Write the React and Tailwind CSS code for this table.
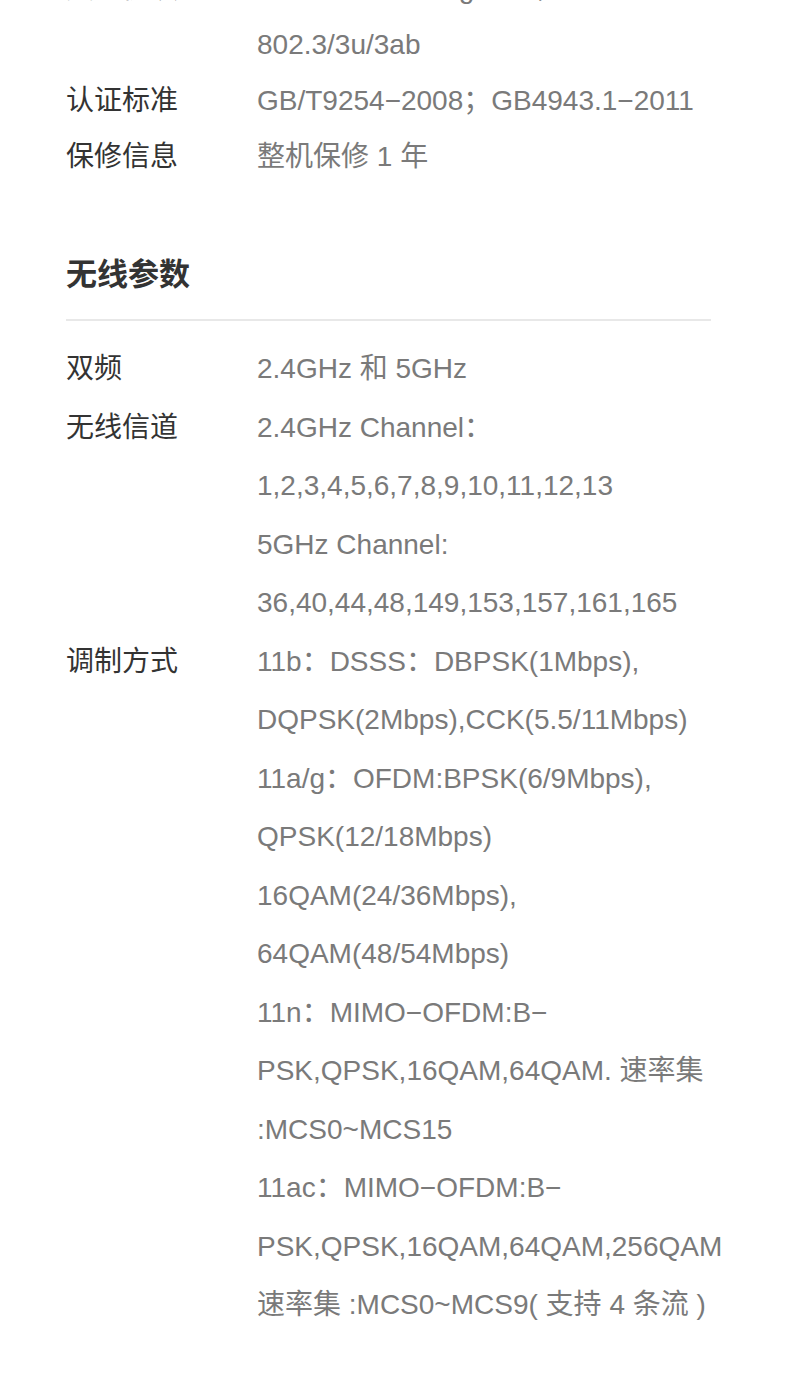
import React from 'react';

const topRows = [
    { label: '支持协议', lines: ['IEEE 802.11a/b/g/n/ac，IEEE', '802.3/3u/3ab'] },
    { label: '认证标准', lines: ['GB/T9254−2008；GB4943.1−2011'] },
    { label: '保修信息', lines: ['整机保修 1 年'] },
];

const wirelessRows = [
    { label: '双频', lines: ['2.4GHz 和 5GHz'] },
    {
        label: '无线信道',
        lines: [
            '2.4GHz Channel：',
            '1,2,3,4,5,6,7,8,9,10,11,12,13',
            '5GHz Channel:',
            '36,40,44,48,149,153,157,161,165',
        ],
    },
    {
        label: '调制方式',
        lines: [
            '11b：DSSS：DBPSK(1Mbps),',
            'DQPSK(2Mbps),CCK(5.5/11Mbps)',
            '11a/g：OFDM:BPSK(6/9Mbps),',
            'QPSK(12/18Mbps)',
            '16QAM(24/36Mbps),',
            '64QAM(48/54Mbps)',
            '11n：MIMO−OFDM:B−',
            'PSK,QPSK,16QAM,64QAM. 速率集',
            ':MCS0~MCS15',
            '11ac：MIMO−OFDM:B−',
            'PSK,QPSK,16QAM,64QAM,256QAM',
            '速率集 :MCS0~MCS9( 支持 4 条流 )',
        ],
    },
];

function SpecRow({ row, lineClass }) {
    return (
        <div className="flex">
            <div className={`w-[191px] shrink-0 text-[28px] text-[#333333] ${lineClass}`}>{row.label}</div>
            <div className="flex flex-col">
                {row.lines.map((line, i) => (
                    <div key={i} className={`whitespace-nowrap text-[28px] text-[#7a7a7a] ${lineClass}`}>
                        {line}
                    </div>
                ))}
            </div>
        </div>
    );
}

export default function App() {
    return (
        <div
            className="min-h-[1374px] overflow-hidden bg-white pl-[66px] pr-[79px]"
            style={{ fontFamily: '"Liberation Sans", "Noto Sans CJK SC", sans-serif' }}
        >
            {/* first row is scrolled mostly out of view in the reference */}
            <div className="mt-[-39px]">
                {topRows.map((row) => (
                    <SpecRow key={row.label} row={row} lineClass="leading-[56px]" />
                ))}
            </div>

            <h2 className="mt-[70px] text-[31px] font-bold leading-[40px] text-[#333333]">无线参数</h2>
            <div className="mt-[24px] h-[2px] bg-[#e8e8e8]" />

            <div className="mt-[19px] pb-[40px]">
                {wirelessRows.map((row) => (
                    <SpecRow key={row.label} row={row} lineClass="leading-[58.5px]" />
                ))}
            </div>
        </div>
    );
}
